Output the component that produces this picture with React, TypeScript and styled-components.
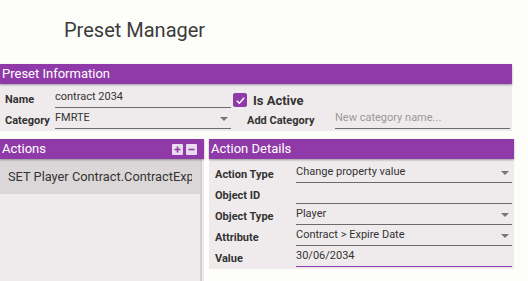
import React from 'react';
import styled, { createGlobalStyle } from 'styled-components';

const GlobalStyle = createGlobalStyle`
  body {
    margin: 0;
    background: #fdfdfa;
    font-family: Roboto, "Liberation Sans", sans-serif;
    color: #333;
  }
`;

const Page = styled.div`
  width: 528px;
  height: 281px;
  overflow: hidden;
`;

const Title = styled.h1`
  margin: 0;
  height: 64px;
  padding: 18px 0 0 64px;
  box-sizing: border-box;
  font-size: 20px;
  font-weight: 400;
  color: #3c3c3c;
`;

const Panel = styled.section<{ $width: number }>`
  width: ${p => p.$width}px;
  background: #efebec;
`;

const Header = styled.div`
  height: 20px;
  background: #8f3aa8;
  color: #fff;
  font-size: 13px;
  line-height: 20px;
  padding-left: 2px;
  display: flex;
  align-items: center;
  box-shadow: 0 1px 2px rgba(0, 0, 0, 0.35);
  position: relative;
`;

const HeaderTitle = styled.span`
  flex: 1;
`;

const MiniButton = styled.span`
  width: 11px;
  height: 11px;
  margin-left: 3px;
  background: #e9dcef;
  border-radius: 1px;
  display: flex;
  align-items: center;
  justify-content: center;
  &:last-child {
    margin-right: 7px;
  }
`;

const PresetBody = styled.div`
  padding: 4px 2px 2px 5px;
  display: flex;
  flex-direction: column;
  gap: 1px;
`;

const Row = styled.div`
  display: flex;
  align-items: flex-end;
  height: 20px;
`;

const Label = styled.label<{ $width: number; $offset?: number }>`
  width: ${p => p.$width}px;
  margin-left: ${p => p.$offset ?? 0}px;
  flex-shrink: 0;
  font-size: 11px;
  font-weight: 700;
  color: #333;
  padding-bottom: 2px;
`;

const Field = styled.div<{ $width?: number; $focused?: boolean; $muted?: boolean }>`
  position: relative;
  ${p => (p.$width ? `width: ${p.$width}px;` : 'flex: 1;')}
  height: 20px;
  box-sizing: border-box;
  border-bottom: 1px solid ${p => (p.$focused ? '#8f3aa8' : '#6d6a6b')};
  font-size: 11px;
  line-height: 14px;
  padding-top: 2px;
  color: ${p => (p.$muted ? '#9a9899' : '#333')};
`;

const Arrow = styled.span`
  position: absolute;
  right: 3px;
  top: 8px;
  width: 0;
  height: 0;
  border-left: 4px solid transparent;
  border-right: 4px solid transparent;
  border-top: 4px solid #777;
`;

const CheckWrap = styled.div`
  display: flex;
  align-items: center;
  gap: 6px;
  margin-left: 2px;
  align-self: center;
  margin-top: 4px;
`;

const CheckBox = styled.span`
  width: 14px;
  height: 14px;
  border-radius: 2px;
  background: #8f3aa8;
  display: flex;
  align-items: center;
  justify-content: center;
`;

const CheckLabel = styled.span`
  font-size: 13px;
  font-weight: 700;
  color: #333;
`;

const Bottom = styled.div`
  display: flex;
  gap: 5px;
  margin-top: 8px;
  align-items: flex-start;
`;

const ActionsPanel = styled(Panel)`
  height: 200px;
`;

const ActionList = styled.div`
  width: 202px;
  height: 180px;
  box-sizing: border-box;
  border-right: 2px solid #d3cfd1;
`;

const ActionItem = styled.div`
  height: 35px;
  background: #dbd7d9;
  padding: 0 8px;
`;

const ActionText = styled.div`
  font-size: 12.8px;
  line-height: 35px;
  color: #333;
  white-space: nowrap;
  overflow: hidden;
`;

const DetailsBody = styled.div`
  padding: 4px 2px 2px 6px;
  display: flex;
  flex-direction: column;
  gap: 1px;
`;

const DropField: React.FC<{ width?: number; children?: React.ReactNode }> = ({ width, children }) => (
  <Field $width={width}>
    {children}
    <Arrow />
  </Field>
);

export default function App() {
  return (
    <Page>
      <GlobalStyle />
      <Title>Preset Manager</Title>

      <Panel $width={512}>
        <Header>
          <HeaderTitle>Preset Information</HeaderTitle>
        </Header>
        <PresetBody>
          <Row>
            <Label $width={50}>Name</Label>
            <Field $width={176}>contract 2034</Field>
            <CheckWrap>
              <CheckBox>
                <svg width="11" height="11" viewBox="0 0 12 12">
                  <path d="M2 6.2 L4.8 9 L10 3" fill="none" stroke="#fff" strokeWidth="1.6" />
                </svg>
              </CheckBox>
              <CheckLabel>Is Active</CheckLabel>
            </CheckWrap>
          </Row>
          <Row>
            <Label $width={50}>Category</Label>
            <DropField width={176}>FMRTE</DropField>
            <Label $width={88} $offset={16}>Add Category</Label>
            <Field $width={175} $muted>New category name...</Field>
          </Row>
        </PresetBody>
      </Panel>

      <Bottom>
        <ActionsPanel $width={204}>
          <Header>
            <HeaderTitle>Actions</HeaderTitle>
            <MiniButton>
              <svg width="7" height="7" viewBox="0 0 7 7">
                <path d="M3.5 0.5 V6.5 M0.5 3.5 H6.5" stroke="#8f3aa8" strokeWidth="1.6" />
              </svg>
            </MiniButton>
            <MiniButton>
              <svg width="7" height="7" viewBox="0 0 7 7">
                <path d="M0.5 3.5 H6.5" stroke="#8f3aa8" strokeWidth="1.6" />
              </svg>
            </MiniButton>
          </Header>
          <ActionList>
            <ActionItem>
              <ActionText>SET Player Contract.ContractExpiryDate</ActionText>
            </ActionItem>
          </ActionList>
        </ActionsPanel>

        <Panel $width={305}>
          <Header>
            <HeaderTitle>Action Details</HeaderTitle>
          </Header>
          <DetailsBody>
            <Row>
              <Label $width={81}>Action Type</Label>
              <DropField>Change property value</DropField>
            </Row>
            <Row>
              <Label $width={81}>Object ID</Label>
              <Field />
            </Row>
            <Row>
              <Label $width={81}>Object Type</Label>
              <DropField>Player</DropField>
            </Row>
            <Row>
              <Label $width={81}>Attribute</Label>
              <DropField>Contract &gt; Expire Date</DropField>
            </Row>
            <Row>
              <Label $width={81}>Value</Label>
              <Field $focused>30/06/2034</Field>
            </Row>
          </DetailsBody>
        </Panel>
      </Bottom>
    </Page>
  );
}
